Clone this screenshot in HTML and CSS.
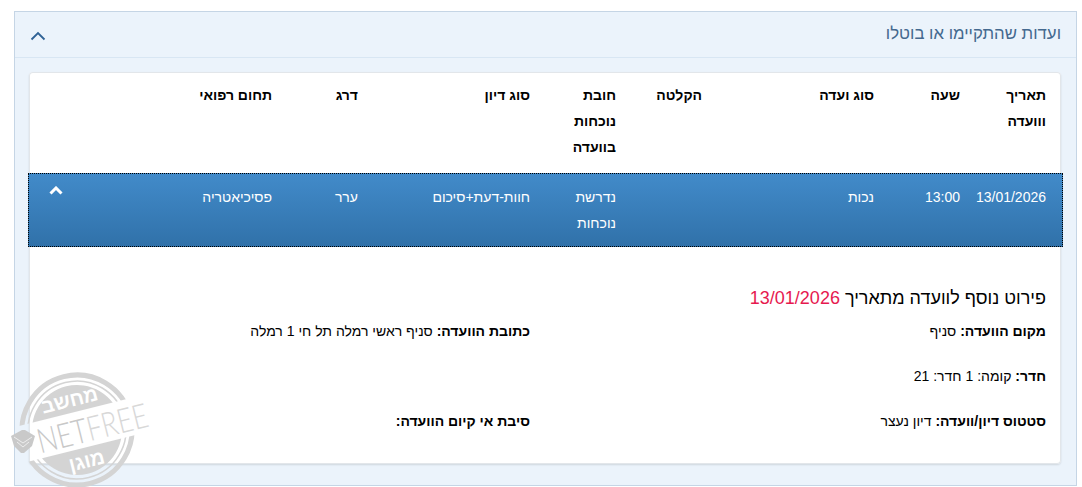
FILE: index.html
```html
<!DOCTYPE html>
<html lang="he" dir="rtl">
<head>
<meta charset="utf-8">
<title>ועדות</title>
<link rel="stylesheet" href="styles.css">
</head>
<body>
<section class="panel">
  <header class="panel-head">
    <h2 class="panel-title">ועדות שהתקיימו או בוטלו</h2>
    <svg class="panel-toggle" width="16" height="10" viewBox="0 0 16 10"><path d="M1.500 8.500 8 2l6.500 6.500" fill="none" stroke="#2f6295" stroke-width="1.800"/></svg>
  </header>
  <div class="panel-body">
    <div class="card">
      <div class="row row-head">
        <div class="cell">תאריך ווועדה</div>
        <div class="cell">שעה</div>
        <div class="cell span-2">סוג ועדה</div>
        <div class="cell">הקלטה</div>
        <div class="cell">חובת נוכחות בוועדה</div>
        <div class="cell span-2">סוג דיון</div>
        <div class="cell">דרג</div>
        <div class="cell span-2">תחום רפואי</div>
      </div>
      <div class="row row-active">
        <div class="cell">13/01/2026</div>
        <div class="cell">13:00</div>
        <div class="cell span-2">נכות</div>
        <div class="cell"></div>
        <div class="cell">נדרשת נוכחות</div>
        <div class="cell span-2">חוות-דעת+סיכום</div>
        <div class="cell">ערר</div>
        <div class="cell span-2">פסיכיאטריה</div>
        <div class="cell chevron-cell">
          <svg width="14" height="9" viewBox="0 0 14 9"><path d="M1.500 7.500 7 2l5.500 5.500" fill="none" stroke="#fff" stroke-width="3"/></svg>
        </div>
      </div>
      <div class="details">
        <h3 class="details-title">פירוט נוסף לוועדה מתאריך <span class="date">13/01/2026</span></h3>
        <div class="details-grid">
          <p class="item"><b>מקום הוועדה:</b> סניף</p>
          <p class="item"><b>כתובת הוועדה:</b> סניף ראשי רמלה תל חי 1 רמלה</p>
          <p class="item"><b>חדר:</b> קומה: 1 חדר: 21</p>
          <p class="item"></p>
          <p class="item"><b>סטטוס דיון/וועדה:</b> דיון נעצר</p>
          <p class="item"><b>סיבת אי קיום הוועדה:</b></p>
        </div>
      </div>
    </div>
  </div>
</section>
<svg class="watermark" width="150" height="121" viewBox="0 0 150 121">
  <defs>
    <mask id="band" maskUnits="userSpaceOnUse" x="-40" y="-40" width="240" height="220">
      <rect x="-40" y="-40" width="240" height="220" fill="#fff"/>
      <rect x="-40" y="46" width="240" height="37" fill="#000"/>
    </mask>
  </defs>
  <g transform="rotate(-14 66 64)">
    <g mask="url(#band)">
      <circle cx="66" cy="64" r="55" class="wm-ring wm-ring-outer"/>
      <circle cx="66" cy="64" r="49" class="wm-ring wm-ring-inner"/>
      <circle cx="66" cy="64" r="45" class="wm-disc"/>
    </g>
    <text x="66" y="40" class="wm-he">מחשב</text>
    <text x="68" y="103" class="wm-he">מוגן</text>
    <text x="25" y="78" class="wm-net" textLength="113" lengthAdjust="spacingAndGlyphs">NET<tspan class="wm-free">FREE</tspan></text>
  </g>
  <path class="wm-shield" d="M0 70 11 64h3l10 6-3 10-8 7h-3l-7-7z"/>
  <path class="wm-shield-line" d="M3 71l9 6 9-6M6 76l6 5 6-5"/>
</svg>
</body>
</html>
```

FILE: styles.css
```css
* { box-sizing: border-box; }
html, body { margin: 0; }
body {
  height: 487px;
  padding: 11px 5px 0 14px;
  background: #fff;
  font-family: "Liberation Sans", Arial, sans-serif;
  font-size: 14px;
  color: #000;
  overflow: hidden;
  position: relative;
}
.panel {
  height: 475px;
  background: #ebf3fb;
  border: 1px solid #c5d5e5;
}
.panel-head {
  height: 46px;
  display: flex;
  align-items: center;
  justify-content: space-between;
  padding: 0 15px;
  border-bottom: 1px solid #d8e6f3;
}
.panel-title {
  margin: 0 0 2px;
  font-size: 16.800px;
  font-weight: 400;
  color: #44698f;
}
.panel-toggle { margin-top: 2px; }
.panel-body { padding: 14px 15px 0 14px; }
.card {
  height: 392px;
  background: #fff;
  border-radius: 4px;
  box-shadow: inset 0 0 0 1px #e2e6ea, 0 1px 2px rgba(0, 0, 0, .12);
}
.row {
  display: grid;
  grid-template-columns: repeat(12, minmax(0, 1fr));
  line-height: 26px;
}
.row-head {
  height: 101px;
  padding-top: 10px;
  font-weight: 700;
}
.row-active {
  height: 74px;
  margin: 0 -2px 0 -1px;
  padding: 11px 2px 0 1px;
  color: #fff;
  background: linear-gradient(#428bca, #3071a9);
  outline: 1px dotted #000;
  outline-offset: -1px;
}
.cell { padding: 0 15px; }
.span-2 { grid-column: span 2; }
.chevron-cell {
  direction: ltr;
  padding: 2px 0 0 20px;
  line-height: 0;
}
.details { padding: 39px 15px 0; }
.details-title {
  margin: 0 0 11px;
  font-size: 18px;
  line-height: 24px;
  font-weight: 400;
}
.date { color: #e6194f; }
.details-grid {
  display: grid;
  grid-template-columns: 1fr 1fr;
  column-gap: 30px;
  grid-auto-rows: 45px;
}
.item { margin: 0; line-height: 20px; }
.watermark {
  position: absolute;
  left: 11px;
  top: 366px;
  pointer-events: none;
  direction: ltr;
  overflow: visible;
}
.wm-ring { fill: none; stroke: #d4d4d4; }
.wm-ring-outer { stroke-width: 5px; }
.wm-ring-inner { stroke-width: 1.500px; }
.wm-disc { fill: #d4d4d4; }
.wm-he {
  font-family: "Liberation Sans", Arial, sans-serif;
  font-size: 20px;
  font-weight: 700;
  fill: #fff;
  text-anchor: middle;
  direction: rtl;
}
.wm-net {
  font-family: Lato, "Liberation Sans", sans-serif;
  font-size: 34px;
  font-weight: 300;
  fill: #c8c8c8;
}
.wm-free { fill: #d8d8d8; font-weight: 300; }
.wm-shield { fill: #c9c9c9; }
.wm-shield-line { fill: none; stroke: #eee; stroke-width: 1px; }
```
